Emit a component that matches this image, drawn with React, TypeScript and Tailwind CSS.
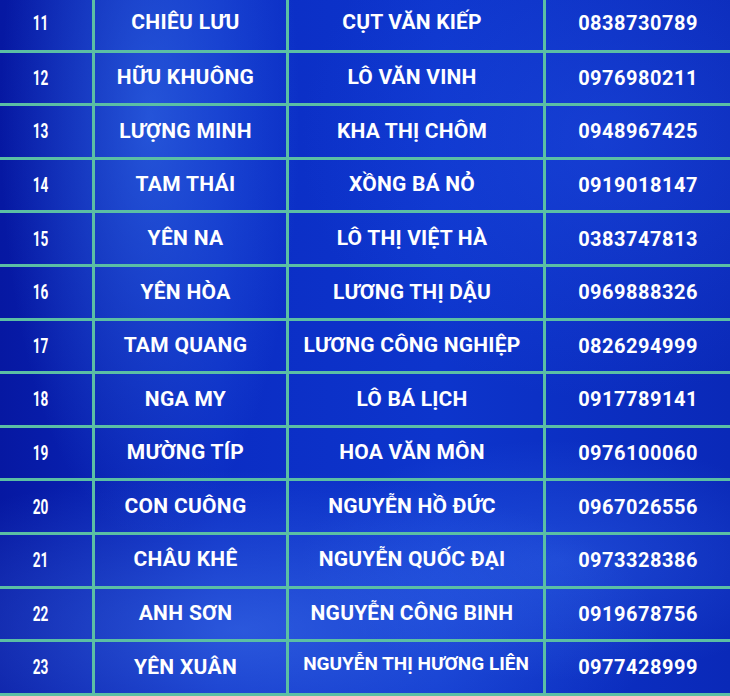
import React from 'react';

const rows = [
  ['11', 'CHIÊU LƯU', 'CỤT VĂN KIẾP', '0838730789'],
  ['12', 'HỮU KHUÔNG', 'LÔ VĂN VINH', '0976980211'],
  ['13', 'LƯỢNG MINH', 'KHA THỊ CHÔM', '0948967425'],
  ['14', 'TAM THÁI', 'XỒNG BÁ NỎ', '0919018147'],
  ['15', 'YÊN NA', 'LÔ THỊ VIỆT HÀ', '0383747813'],
  ['16', 'YÊN HÒA', 'LƯƠNG THỊ DẬU', '0969888326'],
  ['17', 'TAM QUANG', 'LƯƠNG CÔNG NGHIỆP', '0826294999'],
  ['18', 'NGA MY', 'LÔ BÁ LỊCH', '0917789141'],
  ['19', 'MƯỜNG TÍP', 'HOA VĂN MÔN', '0976100060'],
  ['20', 'CON CUÔNG', 'NGUYỄN HỒ ĐỨC', '0967026556'],
  ['21', 'CHÂU KHÊ', 'NGUYỄN QUỐC ĐẠI', '0973328386'],
  ['22', 'ANH SƠN', 'NGUYỄN CÔNG BINH', '0919678756'],
  ['23', 'YÊN XUÂN', 'NGUYỄN THỊ HƯƠNG LIÊN', '0977428999'],
];

const App = () => {
  return (
    <div className="w-[730px] h-[696px] overflow-hidden bg-[#0b30c2] bg-[radial-gradient(ellipse_150px_420px_at_150px_120px,rgba(70,140,255,0.45),transparent),radial-gradient(ellipse_300px_260px_at_600px_140px,rgba(40,90,240,0.35),transparent),radial-gradient(ellipse_420px_160px_at_240px_630px,rgba(90,150,255,0.4),transparent),radial-gradient(ellipse_260px_120px_at_560px_560px,rgba(70,130,255,0.3),transparent),linear-gradient(90deg,#0618a2_0%,#0b2dc4_30%,#0d35cc_60%,#0a29b8_100%)] font-['Roboto','Liberation_Sans',sans-serif] font-bold text-white whitespace-nowrap">
      <div className="-mt-[4px] border-b-[3px] border-[#5bbfa4]">
        {rows.map((r, i) => (
          <div
            key={r[0]}
            className={
              'grid grid-cols-[92px_194px_257px_1fr] h-[53.6px] ' +
              (i > 0 ? 'border-t-[3px] border-[#5bbfa4]' : '')
            }
          >
            <div className="flex items-center justify-center pr-[12px] text-[20px]">
              <span className="inline-block scale-x-[0.68]">{r[0]}</span>
            </div>
            <div className="flex items-center justify-center pr-[10px] border-l-[3px] border-[#5bbfa4] text-[21px] tracking-[0.3px]">
              {r[1]}
            </div>
            <div
              className={
                'flex items-center justify-center border-l-[3px] border-[#5bbfa4] ' +
                (r[2].length > 18 ? 'text-[19px] pb-[6px]' : 'text-[21px] pr-[8px] tracking-[0.2px]')
              }
            >
              {r[2]}
            </div>
            <div className="flex items-center justify-center border-l-[3px] border-[#5bbfa4] text-[20px] tracking-[0.5px]">
              {r[3]}
            </div>
          </div>
        ))}
      </div>
    </div>
  );
};

export default App;
